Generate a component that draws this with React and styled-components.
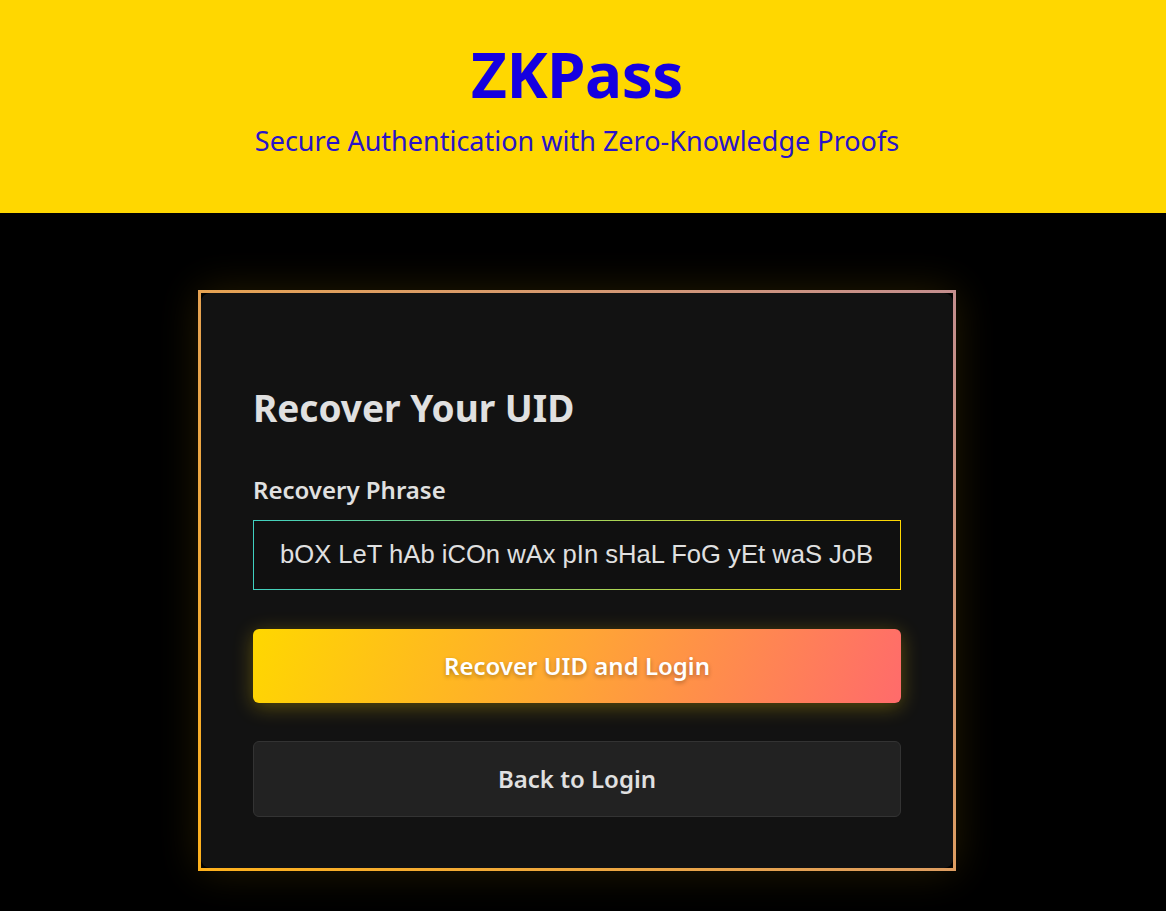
import styled, { createGlobalStyle } from 'styled-components';

const GlobalStyle = createGlobalStyle`
  html, body {
    margin: 0;
    padding: 0;
    background: #000;
  }

  body {
    font-family: 'Noto Sans', 'Open Sans', sans-serif;
    color: #e0e0e0;
  }
`;

const Page = styled.div`
  min-height: 100vh;
  background: #000;
`;

const Header = styled.header`
  background: #ffd700;
  height: 213px;
  box-sizing: border-box;
  padding: 37px 12px 0 0;
  text-align: center;

  > h1 {
    margin: 0;
    font-size: 62px;
    line-height: 1.2;
    font-weight: 700;
    color: #1500e0;
    letter-spacing: -0.5px;
  }

  > p {
    margin: 11px 0 0 0;
    font-size: 27px;
    color: #2a14c8;
  }
`;

const Main = styled.main`
  display: flex;
  justify-content: center;
  padding: 77px 12px 40px 0;
`;

const Card = styled.section`
  width: 758px;
  box-sizing: border-box;
  border: 3px solid;
  border-image: linear-gradient(45deg, #ffb21c 0%, #e2a05a 50%, #c48e8e 100%) 1;
  border-radius: 12px;
  background: #121212;
  background-clip: padding-box;
  box-shadow: 0 0 40px rgba(255, 190, 0, 0.14);
  padding: 95px 52px 51px 52px;
  display: flex;
  flex-direction: column;
`;

const Title = styled.h2`
  margin: 0 0 44px 0;
  font-size: 37px;
  line-height: 1.1;
  font-weight: 700;
  color: #e0e0e0;
`;

const Label = styled.label`
  display: block;
  font-size: 24px;
  font-weight: 600;
  color: #e0e0e0;
  margin-bottom: 14px;
`;

const PhraseInput = styled.input`
  width: 100%;
  height: 70px;
  box-sizing: border-box;
  border: 1px solid;
  border-image: linear-gradient(90deg, #3fd0c0, #ffd700) 1;
  background: #101010;
  color: #e0e0e0;
  font-family: 'Liberation Sans', Arial, sans-serif;
  font-size: 25.6px;
  padding: 0 10px 0 26px;
  outline: none;
`;

const Button = styled.button`
  width: 100%;
  border-radius: 6px;
  font-family: 'Noto Sans', 'Open Sans', sans-serif;
  font-size: 24px;
  font-weight: 600;
  cursor: pointer;
  height: ${(p) => (p.$primary ? '74px' : '76px')};
  margin-top: ${(p) => (p.$primary ? '39px' : '38px')};
  border: ${(p) => (p.$primary ? 'none' : '1px solid #333')};
  color: ${(p) => (p.$primary ? '#fff' : '#e0e0e0')};
  background: ${(p) =>
    p.$primary ? 'linear-gradient(110deg, #ffd700 0%, #ffa535 50%, #ff6b6b 100%)' : '#222'};
  box-shadow: ${(p) => (p.$primary ? '0 4px 20px rgba(255, 215, 0, 0.3)' : 'none')};
  text-shadow: ${(p) => (p.$primary ? '0 2px 4px rgba(0, 0, 0, 0.3)' : 'none')};
`;

export default function App() {
  return (
    <Page>
      <GlobalStyle />
      <Header>
        <h1>ZKPass</h1>
        <p>Secure Authentication with Zero-Knowledge Proofs</p>
      </Header>
      <Main>
        <Card>
          <Title>Recover Your UID</Title>
          <Label htmlFor="phrase">Recovery Phrase</Label>
          <PhraseInput
            id="phrase"
            defaultValue="bOX LeT hAb iCOn wAx pIn sHaL FoG yEt waS JoB"
          />
          <Button $primary>Recover UID and Login</Button>
          <Button>Back to Login</Button>
        </Card>
      </Main>
    </Page>
  );
}
